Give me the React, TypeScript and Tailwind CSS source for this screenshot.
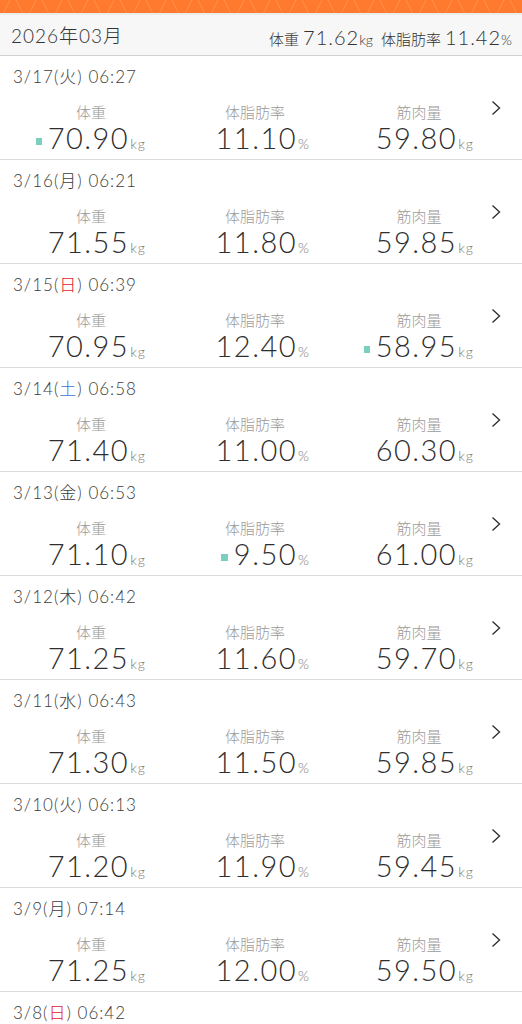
import React from 'react'

type Rec = {
  date: string
  dow: string
  time: string
  weight: string
  fat: string
  muscle: string
  mark?: 'weight' | 'fat' | 'muscle'
}

const RECORDS: Rec[] = [
  { date: '3/17', dow: '火', time: '06:27', weight: '70.90', fat: '11.10', muscle: '59.80', mark: 'weight' },
  { date: '3/16', dow: '月', time: '06:21', weight: '71.55', fat: '11.80', muscle: '59.85' },
  { date: '3/15', dow: '日', time: '06:39', weight: '70.95', fat: '12.40', muscle: '58.95', mark: 'muscle' },
  { date: '3/14', dow: '土', time: '06:58', weight: '71.40', fat: '11.00', muscle: '60.30' },
  { date: '3/13', dow: '金', time: '06:53', weight: '71.10', fat: '9.50', muscle: '61.00', mark: 'fat' },
  { date: '3/12', dow: '木', time: '06:42', weight: '71.25', fat: '11.60', muscle: '59.70' },
  { date: '3/11', dow: '水', time: '06:43', weight: '71.30', fat: '11.50', muscle: '59.85' },
  { date: '3/10', dow: '火', time: '06:13', weight: '71.20', fat: '11.90', muscle: '59.45' },
  { date: '3/9', dow: '月', time: '07:14', weight: '71.25', fat: '12.00', muscle: '59.50' },
]

// last row is cut by the bottom of the screen, only its date shows
const LAST = { date: '3/8', dow: '日', time: '06:42' }

const FONT = { fontFamily: 'Lato, "Noto Sans CJK JP", sans-serif' }

function dowColor(d: string) {
  if (d === '日') return 'text-[#e5222a]'
  if (d === '土') return 'text-[#3d72d6]'
  return ''
}

function DateLine({ date, dow, time }: { date: string; dow: string; time: string }) {
  return (
    <div className="pl-[13px] pt-[10px] text-[17px] leading-[22px] font-light text-[#3c3c3c] tracking-[1px]">
      {date}(<span className={dowColor(dow)}>{dow}</span>) {time}
    </div>
  )
}

function Metric({ label, value, unit, mark }: { label: string; value: string; unit: string; mark?: boolean }) {
  return (
    <div className="flex justify-center">
      <div className="w-[110px] flex flex-col">
        <div className="text-center text-[15px] leading-[20px] font-light text-[#9a9a9a]">{label}</div>
        <div className="flex items-baseline justify-end text-[#2e2e2e]">
          {mark && <span className="w-[7px] h-[7px] bg-[#7ccfbf] mr-[6px] self-center mt-[6px]" />}
          <span className="text-[29px] leading-[32px] font-light tracking-[1.5px]">{value}</span>
          <span className="text-[14px] font-light text-[#777] ml-[1px] tracking-[1px]">{unit}</span>
        </div>
      </div>
    </div>
  )
}

function Row({ r }: { r: Rec }) {
  return (
    <div className="relative h-[104px] border-b border-[#dcdcdc] bg-white">
      <DateLine date={r.date} dow={r.dow} time={r.time} />
      <div className="grid grid-cols-3 w-[492px] ml-[9px] mt-[14px]">
        <Metric label="体重" value={r.weight} unit="kg" mark={r.mark === 'weight'} />
        <Metric label="体脂肪率" value={r.fat} unit="%" mark={r.mark === 'fat'} />
        <Metric label="筋肉量" value={r.muscle} unit="kg" mark={r.mark === 'muscle'} />
      </div>
      <svg className="absolute right-[21px] top-[44px]" width="10" height="16" viewBox="0 0 10 16" fill="none">
        <path d="M1.5 1.5 L8.5 8 L1.5 14.5" stroke="#333" strokeWidth="1.4" />
      </svg>
    </div>
  )
}

function TopBand() {
  return (
    <div className="h-[13px] bg-[#ff7a2e] overflow-hidden">
      <svg width="522" height="13">
        <defs>
          <pattern id="tri" width="26" height="26" patternUnits="userSpaceOnUse" x="0" y="-6">
            <path d="M0 26 L13 0 L26 26 M0 0 L26 0" stroke="#ff9556" strokeWidth="0.8" fill="none" />
          </pattern>
        </defs>
        <rect width="522" height="13" fill="url(#tri)" />
      </svg>
    </div>
  )
}

export default function App() {
  return (
    <div className="w-[522px] h-[1024px] overflow-hidden bg-white" style={FONT}>
      <TopBand />
      <div className="h-[2px] bg-[#ececec]" />
      <div className="h-[41px] bg-[#f7f7f7] border-b border-[#d2d2d2] flex items-center justify-between pl-[11px] pr-[10px] pt-[3px] text-[#333]">
        <div className="text-[19px] font-light tracking-[1px]">2026年03月</div>
        <div className="flex items-baseline font-light">
          <span className="text-[15px]">体重</span>
          <span className="text-[20px] ml-[4px] tracking-[1px]">71.62</span>
          <span className="text-[14px]">kg</span>
          <span className="text-[15px] ml-[8px]">体脂肪率</span>
          <span className="text-[20px] ml-[4px] tracking-[1px]">11.42</span>
          <span className="text-[14px]">%</span>
        </div>
      </div>
      {RECORDS.map((r) => (
        <Row key={r.date} r={r} />
      ))}
      <DateLine date={LAST.date} dow={LAST.dow} time={LAST.time} />
    </div>
  )
}
